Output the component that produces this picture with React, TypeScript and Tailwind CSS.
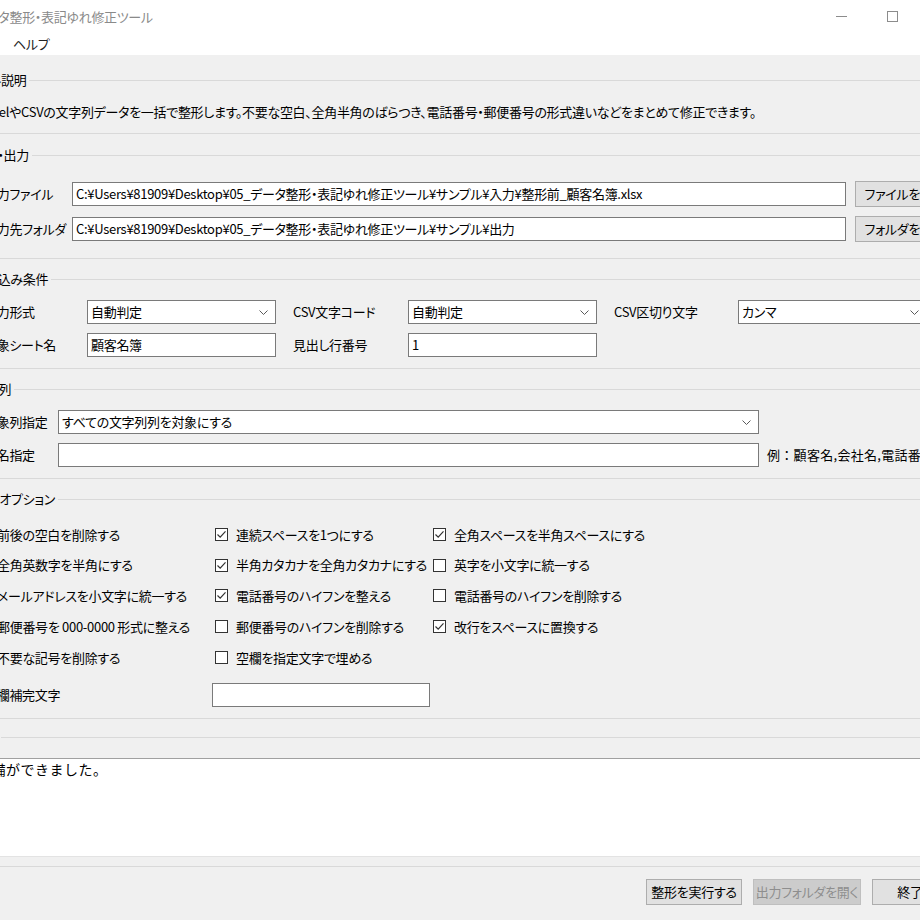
import type { ReactNode } from 'react';

const ui = "font-['Noto_Sans_CJK_JP',sans-serif] [font-feature-settings:'palt'] tracking-[-0.3px]";

type GroupProps = Readonly<{
    label: string;
    labelClass?: string;
    className?: string;
    bodyClass: string;
    children: ReactNode;
}>;

const Group = ({ label, labelClass = '', className = '', bodyClass, children }: GroupProps) => (
    <section className={className}>
        <div className="flex h-[18px] items-center">
            <span className={`shrink-0 whitespace-nowrap leading-[18px] ${labelClass}`}>{label}</span>
            <div className="ml-[3px] h-px flex-1 bg-[#d9d9d9]" />
        </div>
        <div className={bodyClass}>{children}</div>
        <div className="h-px bg-[#d9d9d9]" />
    </section>
);

const Entry = ({ value = '', className = '' }: Readonly<{ value?: string; className?: string }>) => (
    <div
        className={`flex h-[24px] shrink-0 items-center overflow-hidden whitespace-nowrap border border-[#7a7a7a] bg-white pl-[3px] ${className}`}
    >
        {value}
    </div>
);

const Combo = ({ value, className = '' }: Readonly<{ value: string; className?: string }>) => (
    <div
        className={`flex h-[24px] shrink-0 items-center whitespace-nowrap border border-[#7a7a7a] bg-white pl-[3px] pr-[7px] ${className}`}
    >
        <span className="flex-1 overflow-hidden">{value}</span>
        <svg width="9" height="5" viewBox="0 0 9 5" className="shrink-0">
            <polyline points="0.5,0.5 4.5,4.5 8.5,0.5" fill="none" stroke="#5a5a5a" strokeWidth="1" />
        </svg>
    </div>
);

const WinButton = ({
    children,
    disabled = false,
    className = '',
}: Readonly<{ children: ReactNode; disabled?: boolean; className?: string }>) => (
    <div
        className={`flex h-[26px] shrink-0 items-center justify-center whitespace-nowrap border ${
            disabled ? 'border-[#bfbfbf] bg-[#cccccc] text-[#8e8e8e]' : 'border-[#adadad] bg-[#e1e1e1]'
        } ${className}`}
    >
        {children}
    </div>
);

const Check = ({ checked, label }: Readonly<{ checked?: boolean; label: string }>) => (
    <div className="flex h-[30.75px] items-center gap-[8px] whitespace-nowrap">
        <span className="flex h-[13px] w-[13px] shrink-0 items-center justify-center border border-[#333333] bg-white">
            {checked && (
                <svg width="11" height="11" viewBox="0 0 11 11">
                    <polyline points="1.5,5.5 4.2,8.2 9.5,2.3" fill="none" stroke="#333333" strokeWidth="1.2" />
                </svg>
            )}
        </span>
        <span>{label}</span>
    </div>
);

const options: { label: string; checked?: boolean }[] = [
    { label: '前後の空白を削除する', checked: true },
    { label: '連続スペースを1つにする', checked: true },
    { label: '全角スペースを半角スペースにする', checked: true },
    { label: '全角英数字を半角にする', checked: true },
    { label: '半角カタカナを全角カタカナにする', checked: true },
    { label: '英字を小文字に統一する' },
    { label: 'メールアドレスを小文字に統一する', checked: true },
    { label: '電話番号のハイフンを整える', checked: true },
    { label: '電話番号のハイフンを削除する' },
    { label: '郵便番号を 000-0000 形式に整える', checked: true },
    { label: '郵便番号のハイフンを削除する' },
    { label: '改行をスペースに置換する', checked: true },
    { label: '不要な記号を削除する', checked: true },
    { label: '空欄を指定文字で埋める' },
];

export default function App() {
    return (
        <div className={`h-[920px] w-[920px] overflow-hidden bg-[#f0f0f0] text-[13px] text-black ${ui}`}>
            {/* title bar */}
            <div className="flex h-[33px] items-center bg-white">
                <span className="ml-[-26px] whitespace-nowrap text-[#8a8a8a]">データ整形・表記ゆれ修正ツール</span>
                <div className="ml-auto flex h-full">
                    <div className="flex w-[51px] items-center justify-center">
                        <span className="h-px w-[11px] bg-[#8c8c8c]" />
                    </div>
                    <div className="flex w-[51px] items-center justify-center">
                        <span className="mt-[-1px] h-[11px] w-[11px] border border-[#8c8c8c]" />
                    </div>
                    <div className="w-[2px]" />
                </div>
            </div>

            {/* menu */}
            <div className="flex h-[22px] items-center bg-white">
                <span className="ml-[13px] text-[#222222]">ヘルプ</span>
            </div>

            <div className="ml-[-24px] w-[1000px] pt-[16px]">
                <Group label="ツール説明" labelClass="ml-[-11px]" bodyClass="pt-[13px] pb-[11px]">
                    <div className="flex h-[20px] items-center whitespace-nowrap pl-[4px]">
                        ExcelやCSVの文字列データを一括で整形します。不要な空白、全角半角のばらつき、電話番号・郵便番号の形式違いなどをまとめて修正できます。
                    </div>
                </Group>

                <Group
                    label="入力・出力"
                    labelClass="ml-[-4px]"
                    className="mt-[12px]"
                    bodyClass="flex flex-col gap-[9px] pt-[17px] pb-[16px]"
                >
                    <div className="flex h-[26px] items-center">
                        <span className="w-[96px] shrink-0 pl-[8px]">入力ファイル</span>
                        <Entry
                            className="w-[774px]"
                            value="C:¥Users¥81909¥Desktop¥05_データ整形・表記ゆれ修正ツール¥サンプル¥入力¥整形前_顧客名簿.xlsx"
                        />
                        <WinButton className="ml-[9px] w-[100px]">ファイルを選択</WinButton>
                    </div>
                    <div className="flex h-[26px] items-center">
                        <span className="w-[96px] shrink-0 pl-[8px]">出力先フォルダ</span>
                        <Entry
                            className="w-[774px]"
                            value="C:¥Users¥81909¥Desktop¥05_データ整形・表記ゆれ修正ツール¥サンプル¥出力"
                        />
                        <WinButton className="ml-[9px] w-[100px]">フォルダを選択</WinButton>
                    </div>
                </Group>

                <Group
                    label="読込み条件"
                    labelClass="ml-[9px]"
                    className="mt-[11px]"
                    bodyClass="flex flex-col gap-[9px] pt-[12px] pb-[11px]"
                >
                    <div className="flex h-[24px] items-center">
                        <span className="w-[111px] shrink-0 pl-[8px]">入力形式</span>
                        <Combo className="w-[189px]" value="自動判定" />
                        <span className="w-[132px] shrink-0 pl-[17px]">CSV文字コード</span>
                        <Combo className="w-[189px]" value="自動判定" />
                        <span className="w-[141px] shrink-0 pl-[17px]">CSV区切り文字</span>
                        <Combo className="w-[189px]" value="カンマ" />
                    </div>
                    <div className="flex h-[24px] items-center">
                        <span className="w-[111px] shrink-0 pl-[8px]">対象シート名</span>
                        <Entry className="w-[189px]" value="顧客名簿" />
                        <span className="w-[132px] shrink-0 pl-[17px]">見出し行番号</span>
                        <Entry className="w-[189px]" value="1" />
                    </div>
                </Group>

                <Group
                    label="対象列"
                    labelClass="ml-[-3px]"
                    className="mt-[11px]"
                    bodyClass="flex flex-col gap-[9px] pt-[12px] pb-[11px]"
                >
                    <div className="flex h-[24px] items-center">
                        <span className="w-[82px] shrink-0 pl-[8px]">対象列指定</span>
                        <Combo className="w-[701px]" value="すべての文字列列を対象にする" />
                    </div>
                    <div className="flex h-[24px] items-center">
                        <span className="w-[82px] shrink-0 pl-[8px]">列名指定</span>
                        <Entry className="w-[701px]" />
                        <span className="ml-[8px] whitespace-nowrap tracking-[0.3px] [font-feature-settings:normal]">
                            例：顧客名,会社名,電話番号
                        </span>
                    </div>
                </Group>

                <Group label="整形オプション" labelClass="ml-[-2px]" className="mt-[11px]" bodyClass="pt-[11px] pb-[11px]">
                    <div className="grid grid-cols-[239px_218px_260px]">
                        {options.map((o) => (
                            <Check key={o.label} label={o.label} checked={o.checked} />
                        ))}
                    </div>
                    <div className="mt-[10px] flex h-[24px] items-center">
                        <span className="w-[236px] shrink-0 pl-[8px]">空欄補完文字</span>
                        <Entry className="w-[218px]" />
                    </div>
                </Group>

                <Group label="ログ" labelClass="ml-[-2px]" className="mt-[10px]" bodyClass="pt-[11px] pb-[9px]">
                    <div className="h-[99px] border-t border-b border-t-[#a0a0a0] border-b-[#e3e3e3] bg-white pl-[4px]">
                        <p className="ml-[-3px] text-[14px] leading-[20px] tracking-[0.5px] [font-feature-settings:normal]">
                            準備ができました。
                        </p>
                    </div>
                </Group>

                <div className="mt-[12px] flex justify-end gap-[11px] pr-[28px]">
                    <WinButton className="w-[96px]">整形を実行する</WinButton>
                    <WinButton className="w-[108px]" disabled>
                        出力フォルダを開く
                    </WinButton>
                    <WinButton className="w-[76px]">終了</WinButton>
                </div>
            </div>
        </div>
    );
}
